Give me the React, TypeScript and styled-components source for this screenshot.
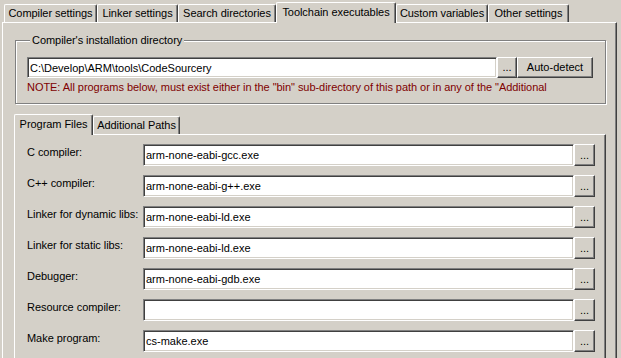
import { Fragment } from "react";
import styled, { createGlobalStyle } from "styled-components";

const GlobalStyle = createGlobalStyle`
    html, body {
        margin: 0;
        padding: 0;
        background: #d4d0c8;
        overflow: hidden;
    }
    body {
        font-family: "Liberation Sans", Arial, sans-serif;
        font-size: 11px;
        letter-spacing: -0.05px;
        color: #000;
    }
`;

const face = "#d4d0c8";

const Window = styled.div`
    width: 615px;
    height: 356px;
    padding: 2px 0 0 2px;
    overflow: hidden;
`;

const TabStrip = styled.div<{ $inset: number }>`
    display: flex;
    align-items: flex-end;
    height: 20px;
    padding-left: ${props => props.$inset}px;
    position: relative;
    z-index: 1;
`;

const Tab = styled.div<{ $w: number; $active?: boolean }>`
    box-sizing: border-box;
    width: ${props => props.$w}px;
    height: ${props => (props.$active ? 21 : 18)}px;
    margin-bottom: ${props => (props.$active ? -1 : 0)}px;
    padding-top: ${props => (props.$active ? 3 : 2)}px;
    text-align: center;
    line-height: 13px;
    white-space: nowrap;
    background: ${face};
    border-top: 1px solid #fff;
    border-left: 1px solid #fff;
    border-right: 1px solid #404040;
    border-top-left-radius: 2px;
    border-top-right-radius: 2px;
    box-shadow: inset -1px 0 0 #808080;
`;

const Panel = styled.div<{ $height: number }>`
    box-sizing: border-box;
    height: ${props => props.$height}px;
    border-top: 1px solid #fff;
    border-left: 1px solid #fff;
    border-right: 1px solid #404040;
    box-shadow: inset -1px 0 0 #808080;
`;

const OuterPanel = styled(Panel)`
    padding: 11px 10px 0 11px;
`;

// etched frame with its caption sitting on the top line
const GroupBox = styled.div`
    margin: 6px 0 0 1px;
    padding: 0 12px 9px 11px;
    border: 1px solid #808080;
    box-shadow: inset 1px 1px 0 #fff, 1px 1px 0 #fff;
`;

const GroupTitle = styled.div`
    display: table;
    margin: -7px 0 0 3px;
    padding: 0 2px;
    line-height: 13px;
    background: ${face};
`;

const PathRow = styled.div`
    display: flex;
    height: 21px;
    margin-top: 10px;
`;

const Field = styled.input`
    box-sizing: border-box;
    flex: 1;
    min-width: 0;
    height: 100%;
    margin: 0;
    padding: 0 0 0 2px;
    font: inherit;
    color: #000;
    background: #fff;
    outline: none;
    border: 1px solid;
    border-color: #808080 #fff #fff #808080;
    box-shadow: inset 1px 1px 0 #404040, inset -1px -1px 0 ${face};
`;

const Button = styled.button<{ $w: number }>`
    box-sizing: border-box;
    width: ${props => props.$w}px;
    height: 100%;
    margin: 0;
    padding: 0;
    font: inherit;
    color: #000;
    background: ${face};
    border: 1px solid;
    border-color: #fff #404040 #404040 #fff;
    box-shadow: inset -1px -1px 0 #808080;
    line-height: 13px;
`;

const Note = styled.div`
    margin-top: 3px;
    line-height: 13px;
    color: #800000;
    white-space: nowrap;
`;

const InnerTabs = styled.div`
    margin-top: 10px;
`;

const InnerPanel = styled(Panel)`
    padding: 9px 10px 0 12px;
`;

const Grid = styled.div`
    display: grid;
    grid-template-columns: 116px 1fr 21px;
    grid-auto-rows: 22px;
    row-gap: 9px;
`;

const Label = styled.div`
    padding-top: 2px;
    line-height: 13px;
    white-space: nowrap;
`;

const tabs = [
    { label: "Compiler settings", w: 93 },
    { label: "Linker settings", w: 81 },
    { label: "Search directories", w: 98 },
    { label: "Toolchain executables", w: 120, active: true },
    { label: "Custom variables", w: 92 },
    { label: "Other settings", w: 81 },
];

const programs = [
    { label: "C compiler:", value: "arm-none-eabi-gcc.exe" },
    { label: "C++ compiler:", value: "arm-none-eabi-g++.exe" },
    { label: "Linker for dynamic libs:", value: "arm-none-eabi-ld.exe" },
    { label: "Linker for static libs:", value: "arm-none-eabi-ld.exe" },
    { label: "Debugger:", value: "arm-none-eabi-gdb.exe" },
    { label: "Resource compiler:", value: "" },
    { label: "Make program:", value: "cs-make.exe" },
];

export default function App() {
    return <>
        <GlobalStyle/>
        <Window>
            <TabStrip $inset={2}>
                {tabs.map(t => <Tab key={t.label} $w={t.w} $active={t.active}>{t.label}</Tab>)}
            </TabStrip>
            <OuterPanel $height={340}>
                <GroupBox>
                    <GroupTitle>Compiler's installation directory</GroupTitle>
                    <PathRow>
                        <Field readOnly value={"C:\\Develop\\ARM\\tools\\CodeSourcery"}/>
                        <Button $w={20}>...</Button>
                        <Button $w={76}>Auto-detect</Button>
                    </PathRow>
                    <Note>NOTE: All programs below, must exist either in the "bin" sub-directory of this path or in any of the "Additional</Note>
                </GroupBox>
                <InnerTabs>
                    <TabStrip $inset={0}>
                        <Tab $w={79} $active>Program Files</Tab>
                        <Tab $w={87}>Additional Paths</Tab>
                    </TabStrip>
                    <InnerPanel $height={240}>
                        <Grid>
                            {programs.map(p => <Fragment key={p.label}>
                                <Label>{p.label}</Label>
                                <Field readOnly value={p.value}/>
                                <Button $w={21}>...</Button>
                            </Fragment>)}
                        </Grid>
                    </InnerPanel>
                </InnerTabs>
            </OuterPanel>
        </Window>
    </>;
}
